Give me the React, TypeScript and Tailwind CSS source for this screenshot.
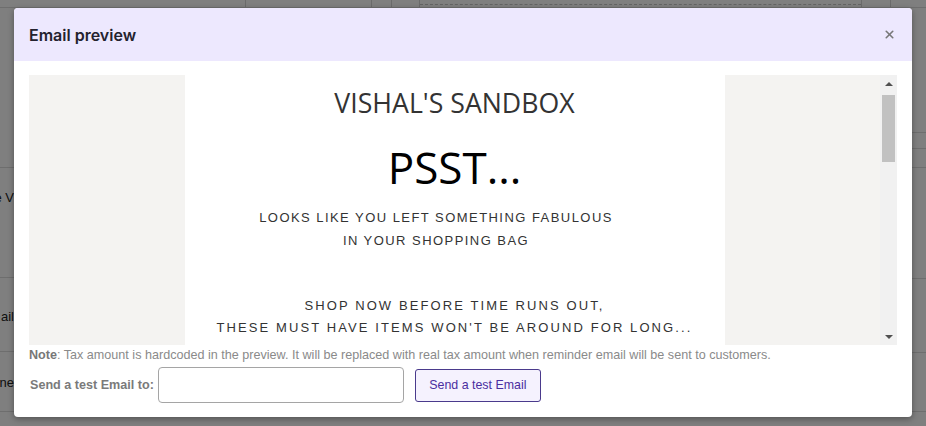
import { X } from 'lucide-react';

// fondo de la página detrás del modal (solo decorativo)
function BackgroundPage() {
  return (
    <div className="absolute inset-0 bg-white font-['Liberation_Sans',Arial,sans-serif] text-[13px] text-[#222]">
      <div className="flex h-[8px] border-b border-[#dcdcdc]">
        <div className="w-[246px] border-r border-[#d6d6d6]" />
        <div className="w-[126px] border-r border-[#d6d6d6]" />
        <div className="w-[20px] border-r border-[#d6d6d6]" />
        <div className="w-[28px] border-r border-[#d6d6d6]" />
        <div className="w-[442px] border-r border-[#d6d6d6] pt-[4px]">
          <div className="border-t border-dashed border-[#c8c8c8]" />
        </div>
        <div className="w-[29px] border-r border-[#d6d6d6]" />
      </div>
      <div className="flex">
        <div className="w-[14px] overflow-hidden">
          <div className="h-[160px] border-b border-[#dcdcdc]" />
          <div className="flex h-[110px] justify-end border-b border-[#dcdcdc] pt-[20px]">
            <span className="whitespace-nowrap">e V</span>
          </div>
          <div className="flex h-[74px] justify-end border-b border-[#dcdcdc] pt-[29px]">
            <span className="whitespace-nowrap">ail</span>
          </div>
          <div className="flex h-[60px] justify-end border-b border-[#dcdcdc] pt-[21px]">
            <span className="whitespace-nowrap">ne</span>
          </div>
        </div>
        <div className="flex-1" />
        <div className="w-[14px]">
          <div className="h-[125px] border-b border-[#dcdcdc]" />
          <div className="h-[16px] border-b border-[#dcdcdc]" />
          <div className="h-[19px] border-b border-[#dcdcdc]" />
          <div className="h-[111px] border-b border-[#dcdcdc]" />
          <div className="h-[74px] border-b border-[#dcdcdc]" />
          <div className="h-[59px] border-b border-[#dcdcdc]" />
        </div>
      </div>
    </div>
  );
}

function FakeScrollbar() {
  return (
    <div className="flex w-[17px] flex-col items-center bg-[#f1f1f1]">
      <div className="flex h-[17px] w-full items-center justify-center">
        <div className="h-0 w-0 border-x-[4px] border-b-[4px] border-x-transparent border-b-[#505050]" />
      </div>
      <div className="mt-[3px] h-[67px] w-[13px] bg-[#c1c1c1]" />
      <div className="flex-1" />
      <div className="flex h-[17px] w-full items-center justify-center">
        <div className="h-0 w-0 border-x-[4px] border-t-[4px] border-x-transparent border-t-[#505050]" />
      </div>
    </div>
  );
}

function EmailBody() {
  return (
    <div className="flex h-[270px] overflow-hidden">
      <div className="flex flex-1 justify-center bg-[#f4f3f1]">
        <div className="w-[540px] bg-white pt-[10px] text-center">
          <div className="font-['Open_Sans',sans-serif] text-[26.7px] leading-[36px] text-[#333]">
            VISHAL'S SANDBOX
          </div>
          <div className="mt-[18px] font-['Open_Sans',sans-serif] text-[44px] leading-[56px] text-black">
            PSST...
          </div>
          <div className="mt-[11px] pr-[37px] font-['Liberation_Sans',Arial,sans-serif] text-[13px] leading-[23px] tracking-[1.45px] text-[#333]">
            LOOKS LIKE YOU LEFT SOMETHING FABULOUS
            <br />
            IN YOUR SHOPPING BAG
          </div>
          <div className="mt-[43px] font-['Liberation_Sans',Arial,sans-serif] text-[13px] leading-[22px] tracking-[2.1px] text-[#333]">
            SHOP NOW BEFORE TIME RUNS OUT,
            <br />
            THESE MUST HAVE ITEMS WON'T BE AROUND FOR LONG...
          </div>
        </div>
      </div>
      <FakeScrollbar />
    </div>
  );
}

export default function App() {
  return (
    <div className="relative h-[426px] w-full overflow-hidden">
      <BackgroundPage />
      <div className="absolute inset-0 bg-black/50" />

      {/* Modal */}
      <div className="absolute left-[14px] top-[8px] w-[898px] overflow-hidden rounded-[4px] bg-white shadow-[0_2px_6px_rgba(0,0,0,0.35)]">
        <div className="flex h-[53px] items-center justify-between bg-[#ede8fe] pl-[15px] pr-[12px]">
          <h2 className="font-['Inter',sans-serif] text-[16px] font-semibold text-[#24222e]">Email preview</h2>
          <button className="p-1 text-[#777]">
            <X size={13} strokeWidth={3} />
          </button>
        </div>

        <div className="px-[15px] pb-[14px] pt-[14px] font-['Liberation_Sans',Arial,sans-serif]">
          <EmailBody />

          <p className="mt-[2px] text-[12.6px] leading-[16px] text-[#8a8a8a]">
            <span className="font-bold text-[#777]">Note</span>: Tax amount is hardcoded in the preview. It will be replaced with real tax amount when reminder email will be sent to customers.
          </p>

          <div className="mt-[4px] flex items-center">
            <label className="ml-[1px] mr-[4px] text-[12.6px] font-bold text-[#7a7a7a]">Send a test Email to:</label>
            <input
              type="text"
              className="h-[36px] w-[246px] rounded-[4px] border border-[#a5a5a5] bg-white px-2 text-[13px] outline-none"
            />
            <button className="ml-[11px] h-[33px] w-[126px] rounded-[3px] border border-[#4a3a8c] bg-[#f5f2fe] text-[12.4px] text-[#4a2ea0]">
              Send a test Email
            </button>
          </div>
        </div>
      </div>
    </div>
  );
}
